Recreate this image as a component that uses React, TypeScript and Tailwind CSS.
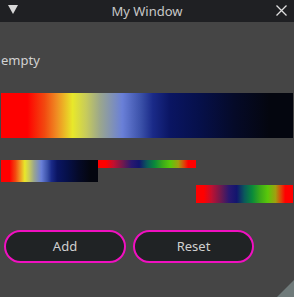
import React from "react";

const mainGrad =
  "linear-gradient(to right, #ff0000 0%, #ff0000 9%, #f24a10 15%, #f08a22 19%, #e8e82a 24.5%, #c8cc5a 29%, #9aa68e 34%, #6a80d8 41.5%, #3a50a8 48%, #1a2a88 52%, #0a1562 58%, #06104a 68%, #050a28 80%, #04060f 92%, #04060f 100%)";
const rainbowGrad =
  "linear-gradient(to right, #ff0000 0%, #ff0000 8%, #c01030 16%, #6a1a50 26%, #2a1870 34%, #12156e 42%, #0a5a5a 50%, #0a8a3a 58%, #3aaa1a 66%, #5ac80a 74%, #a0a010 82%, #e04008 88%, #ff0000 92%, #ff0000 100%)";

export default function App() {
  return (
    <div
      className="relative w-[294px] h-[297px] bg-[#454545] overflow-hidden flex flex-col"
      style={{ fontFamily: '"Noto Sans", "Open Sans", sans-serif' }}
    >
      <div className="h-[22px] bg-[#1f2023] flex items-center relative shrink-0">
        <svg className="absolute left-[8px] top-[5px]" width="10" height="9" viewBox="0 0 10 9">
          <polygon points="0,0 10,0 5,9" fill="#d8d8d8" />
        </svg>
        <div className="w-full text-center text-[13px] leading-[22px] text-[#c8c8c8]">My Window</div>
        <svg className="absolute left-[276px] top-[5px]" width="11" height="11" viewBox="0 0 11 11">
          <path d="M0.5 0.5 L10.5 10.5 M10.5 0.5 L0.5 10.5" stroke="#e0e0e0" strokeWidth="1.3" />
        </svg>
      </div>
      <div className="flex flex-col pl-[1px]">
        <div className="mt-[30px] h-[16px] text-[13px] leading-[16px] text-[#d2d2d2]">empty</div>
        <div className="mt-[25px] w-[292px] h-[45px]" style={{ background: mainGrad }} />
        <div className="mt-[22px] flex items-start">
          <div className="w-[97px] h-[22px]" style={{ background: mainGrad }} />
          <div className="w-[98px] h-[8px]" style={{ background: rainbowGrad }} />
        </div>
        <div className="mt-[3px] ml-[195px] w-[97px] h-[18px]" style={{ background: rainbowGrad }} />
        <div className="mt-[27px] flex gap-[7px] pl-[3px]">
          <button className="w-[122px] h-[33px] rounded-full border-2 border-[#f010c0] bg-[#202325] text-[13px] text-[#d0d0d0]">
            Add
          </button>
          <button className="w-[121px] h-[33px] rounded-full border-2 border-[#f010c0] bg-[#202325] text-[13px] text-[#d0d0d0]">
            Reset
          </button>
        </div>
      </div>
      <svg className="absolute right-0 bottom-0" width="17" height="17" viewBox="0 0 17 17">
        <polygon points="17,0 17,17 0,17" fill="#6f7a7a" />
      </svg>
    </div>
  );
}
